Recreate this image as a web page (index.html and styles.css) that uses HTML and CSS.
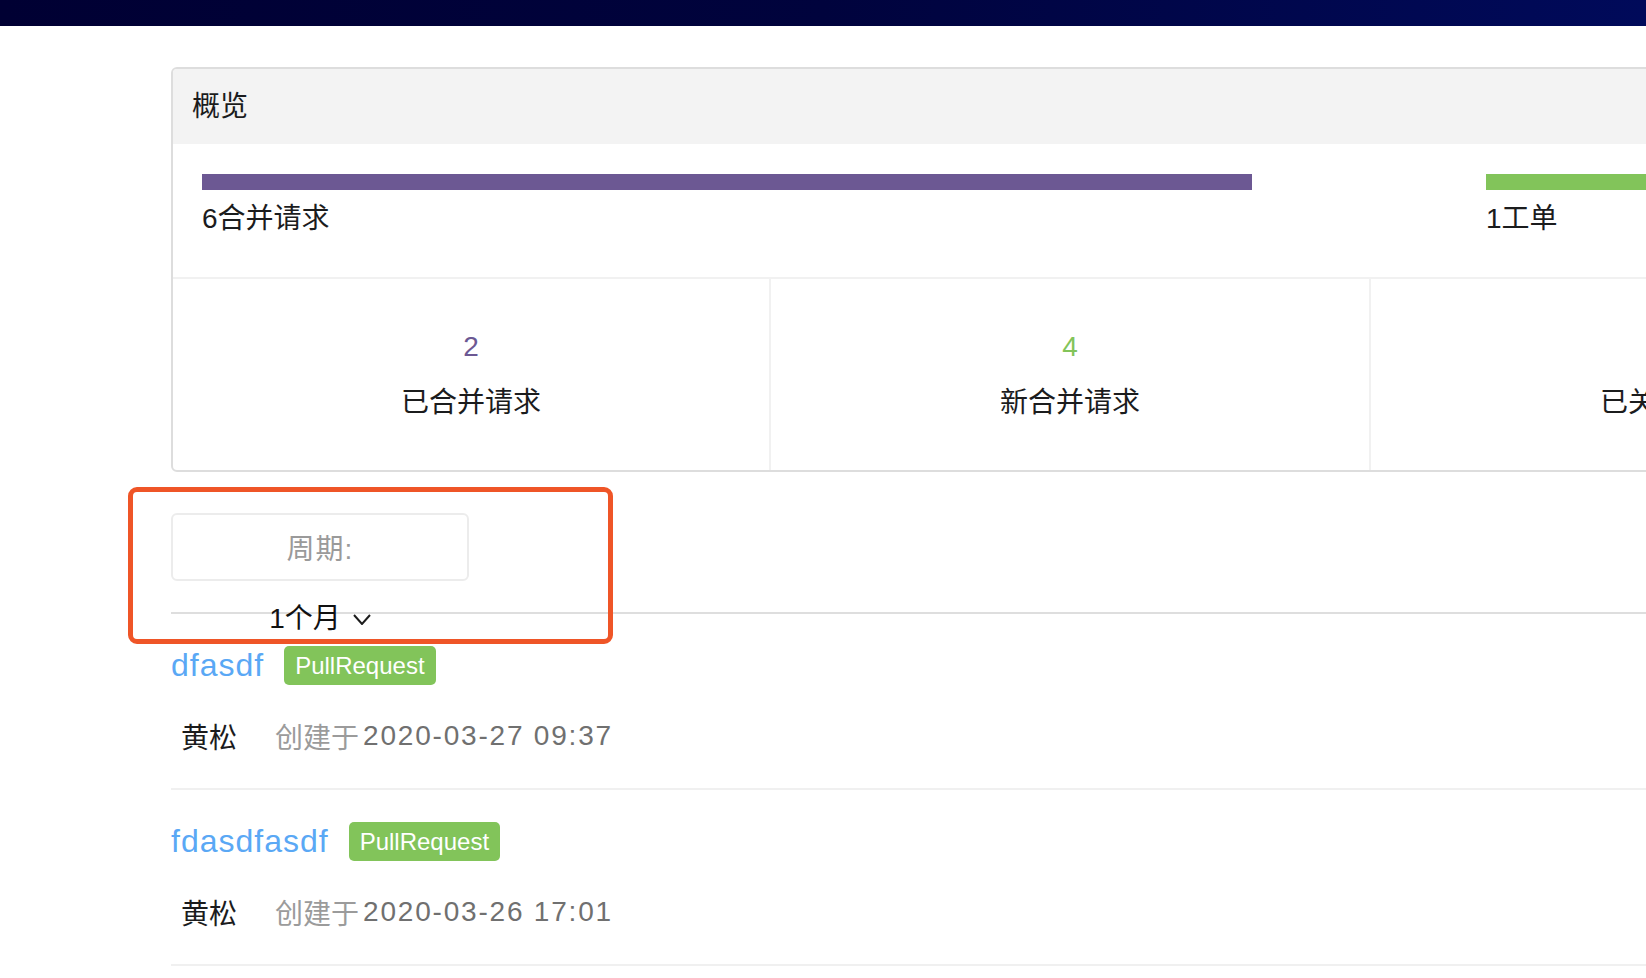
FILE: index.html
```html
<!DOCTYPE html>
<html lang="zh-CN">
<head>
<meta charset="utf-8">
<title>概览</title>
<link rel="stylesheet" href="styles.css">
</head>
<body>
<div class="topbar"></div>
<main class="page">
  <section class="card">
    <div class="card-header">概览</div>
    <div class="bars">
      <div class="bar-cell">
        <div class="bar purple" style="width:1050px"></div>
        <div class="bar-label">6合并请求</div>
      </div>
      <div class="bar-cell">
        <div class="bar green" style="width:600px"></div>
        <div class="bar-label">1工单</div>
      </div>
    </div>
    <div class="stats">
      <div class="stat">
        <div class="stat-num purple-text">2</div>
        <div class="stat-label">已合并请求</div>
      </div>
      <div class="stat">
        <div class="stat-num green-text">4</div>
        <div class="stat-label">新合并请求</div>
      </div>
      <div class="stat">
        <div class="stat-num red-text">0</div>
        <div class="stat-label">已关闭工单</div>
      </div>
      <div class="stat">
        <div class="stat-num green-text">1</div>
        <div class="stat-label">新工单</div>
      </div>
    </div>
  </section>

  <div class="filter-wrap">
    <div class="filter">
      <div class="period-box">周期:</div>
      <div class="dropdown">
        <span class="dropdown-text">1个月</span>
        <svg class="chevron" width="18" height="11" viewBox="0 0 18 11"><polyline points="1,1 9,10 17,1" fill="none" stroke="#1c1c1c" stroke-width="2"/></svg>
      </div>
    </div>
    <div class="highlight"></div>
  </div>

  <ul class="list">
    <li class="item">
      <div class="item-title"><a class="link" href="#">dfasdf</a><span class="tag">PullRequest</span></div>
      <div class="item-meta"><span class="author">黄松</span><span class="created">创建于</span><span class="date">2020-03-27 09:37</span></div>
    </li>
    <li class="item">
      <div class="item-title"><a class="link" href="#">fdasdfasdf</a><span class="tag">PullRequest</span></div>
      <div class="item-meta"><span class="author">黄松</span><span class="created">创建于</span><span class="date">2020-03-26 17:01</span></div>
    </li>
  </ul>
</main>
</body>
</html>
```

FILE: styles.css
```css
html, body {
  margin: 0;
  padding: 0;
  background: #fff;
  overflow: hidden;
}
body {
  font-family: "Liberation Sans", "Noto Sans CJK SC", sans-serif;
  color: #1b1c1d;
  width: 1646px;
  height: 978px;
}
.topbar {
  height: 26px;
  background: linear-gradient(90deg, #000033 0%, #00033d 50%, #000a5a 100%);
}
.page {
  padding: 41px 0 0 171px;
  width: 2500px;
}
.card {
  width: 2396px;
  border: 2px solid #dddddd;
  border-radius: 6px;
  overflow: hidden;
}
.card-header {
  background: #f3f3f3;
  height: 75px;
  line-height: 75px;
  padding-left: 19px;
  font-size: 28px;
  color: #1b1c1d;
}
.bars {
  display: grid;
  grid-template-columns: 1284px 1fr;
  padding: 30px 0 0 29px;
  height: 103px;
  border-bottom: 2px solid #f1f1f1;
}
.bar {
  height: 16px;
}
.purple { background: #6c5893; }
.green { background: #82c45a; }
.bar-label {
  font-size: 28px;
  line-height: 40px;
  margin-top: 9px;
  color: #1b1c1d;
}
.stats {
  display: grid;
  grid-template-columns: 596px 600px 600px 600px;
  height: 191px;
}
.stat {
  display: flex;
  flex-direction: column;
  align-items: center;
  justify-content: center;
  gap: 16px;
}
.stat + .stat {
  border-left: 2px solid #f1f1f1;
}
.stat-num {
  font-size: 28px;
  line-height: 40px;
}
.purple-text { color: #6c5893; }
.green-text { color: #82c45a; }
.red-text { color: #db2828; }
.stat-label {
  font-size: 28px;
  line-height: 40px;
  color: #1b1c1d;
}
.filter-wrap {
  position: relative;
  margin-top: 41px;
}
.filter {
  border-bottom: 2px solid #dedede;
}
.period-box {
  width: 294px;
  height: 64px;
  border: 2px solid #ececec;
  border-radius: 6px;
  display: flex;
  align-items: center;
  justify-content: center;
  font-size: 28px;
  color: #9a9a9a;
  letter-spacing: 1px;
}
.dropdown {
  width: 298px;
  height: 31px;
  display: flex;
  justify-content: center;
  align-items: flex-start;
  gap: 12px;
}
.dropdown-text {
  font-size: 28px;
  line-height: 40px;
  margin-top: 18px;
  height: 40px;
  color: #111;
}
.chevron {
  margin-top: 33px;
}
.highlight {
  position: absolute;
  left: -43px;
  top: -26px;
  width: 475px;
  height: 147px;
  border: 5px solid #ef5527;
  border-radius: 9px;
  pointer-events: none;
}
.list {
  list-style: none;
  margin: 0;
  padding: 0;
  width: 1500px;
}
.item {
  padding: 31px 0 32px 0;
  border-bottom: 2px solid #f0f0f0;
}
.item-title {
  display: flex;
  align-items: center;
  height: 40px;
}
.link {
  font-size: 32px;
  letter-spacing: 1px;
  color: #5aa8f5;
  text-decoration: none;
  margin-right: 20px;
}
.tag {
  display: inline-block;
  background: #82c45a;
  color: #fff;
  font-size: 24px;
  height: 39px;
  line-height: 39px;
  padding: 0 11px;
  border-radius: 5px;
}
.item-meta {
  margin-top: 31px;
  display: flex;
  align-items: center;
  height: 40px;
  padding-left: 10px;
  font-size: 28px;
}
.author {
  color: #1b1c1d;
  margin-right: 38px;
}
.created {
  color: #9b9b9b;
  margin-right: 4px;
}
.date {
  color: #707070;
  letter-spacing: 1.8px;
}
```
